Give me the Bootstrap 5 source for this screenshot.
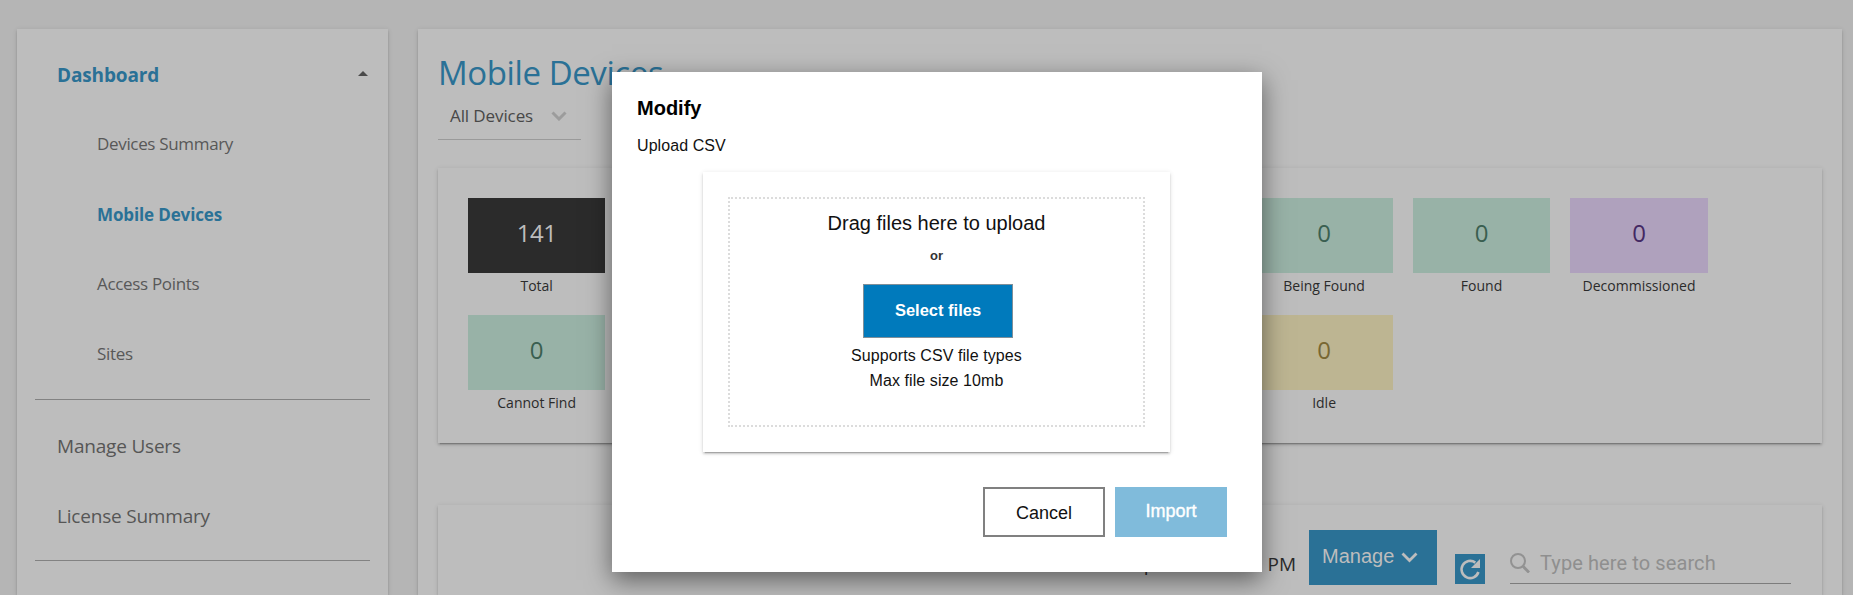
<!DOCTYPE html>
<html lang="en">
<head>
<meta charset="utf-8">
<title>Mobile Devices</title>
<link href="https://cdn.jsdelivr.net/npm/bootstrap@5.3.0/dist/css/bootstrap.min.css" rel="stylesheet">
<style>
  body { background: #b5b5b5; font-family: "Open Sans", "Noto Sans", sans-serif; height: 595px; overflow: hidden; color: #2b2b2b; }
  .shell { padding: 29px 11px 0 17px; gap: 30px; height: 595px; overflow: hidden; }
  .panel { background: #bdbdbd; box-shadow: 0 3px 1px -2px rgba(0,0,0,.2), 0 2px 2px 0 rgba(0,0,0,.14), 0 1px 5px 0 rgba(0,0,0,.12); }
  .side { width: 371px; padding: 11px 18px 0; }
  .side .nav-link { height: 70px; padding: 0 2px 2px 22px; font-size: 19px; letter-spacing: -.2px; color: #565656; display: flex; align-items: center; white-space: nowrap; }
  .side .sub-item { padding-left: 62px; font-size: 17px; letter-spacing: -.33px; color: #585858; }
  .side .active { color: #2a7196; font-weight: 700; letter-spacing: -.13px; padding-bottom: 0; }
  .rule { height: 1px; background: #828282; }
  .main-panel { padding: 0 20px; }
  .page-title { font-size: 33px; font-weight: 400; letter-spacing: -.4px; color: #2a7196; line-height: 46px; margin: 0 0 -1px 0; padding-top: 21px; white-space: nowrap; }
  .filter { width: 143px; height: 45px; border-bottom: 1px solid #9a9a9a; padding: 0 14px 3px 12px; font-size: 17px; letter-spacing: -.1px; color: #484848; white-space: nowrap; }
  .stats { margin-top: 28px; height: 275px; padding: 30px 30px 0; display: grid; grid-template-columns: repeat(8, 137.3px); column-gap: 20.2px; grid-template-rows: 117px 117px; align-content: start; }
  .tile { height: 75px; font-size: 24px; line-height: 70px; }
  .tile-label { font-size: 14px; line-height: 25px; white-space: nowrap; }
  .t-dark { background: #2b2b2b; color: #bdbdbd; letter-spacing: -.5px; }
  .t-green { background: #98b2a7; color: #3a5f50; }
  .t-purple { background: #afa1bd; color: #432863; }
  .t-yellow { background: #bdb592; color: #786732; }
  .table-card { margin-top: 62px; height: 90px; padding: 25px 31px 0 0; }
  .stamp { font-size: 19px; line-height: 26px; margin-top: 21px; }
  .btn-manage { width: 128px; height: 55px; background: #2a7196; color: #bdbdbd; font: 20px/53px "Liberation Sans", Arial, sans-serif; padding: 0 0 0 13px; }
  .btn-refresh { width: 30px; height: 30px; background: #2a7196; margin: 24px 25px 0 18px; }
  .search { width: 281px; height: 33px; margin-top: 21px; border-bottom: 1px solid #7c7c7c; font: 20px/24px Roboto, sans-serif; letter-spacing: .1px; color: #8f8f8f; }
  .dlg { position: absolute; left: 612px; top: 72px; width: 650px; height: 500px; background: #fff; color: #111; font: 16px/25px "Liberation Sans", Arial, sans-serif; padding: 24px 35px 0 25px; box-shadow: 0 8px 24px rgba(0,0,0,.5); }
  .dlg h2 { font-size: 20px; font-weight: 700; line-height: 24px; margin: 0; color: #000; }
  .drop-card { width: 467px; height: 280px; margin: 14px 0 0 66px; padding: 25px; background: #fff; }
  .drop-zone { height: 230px; border: 2px dotted #dcdcdc; padding-top: 12px; }
  .or-text { font-size: 13px; font-weight: 700; line-height: 20px; color: #333; margin-top: 10px; }
  .btn-select { width: 150px; height: 54px; background: #007abc; border: 1px solid #7f8f99; color: #fff; font-size: 16.5px; font-weight: 700; line-height: 51px; margin: 18px 0 5px 3px; }
  .hint { letter-spacing: .08px; }
  .btn-cancel, .btn-import { height: 50px; font-size: 18px; text-align: center; }
  .btn-cancel { width: 122px; border: 2px solid #808080; line-height: 49px; }
  .btn-import { width: 112px; background: #80bbdb; color: #fff; line-height: 49px; -webkit-text-stroke: .4px #fff; }
</style>
<script src="https://cdn.jsdelivr.net/npm/bootstrap@5.3.0/dist/js/bootstrap.bundle.min.js"></script>
</head>
<body>
<div class="shell d-flex">
  <nav class="panel side flex-shrink-0">
    <div class="nav flex-column">
      <a class="nav-link active justify-content-between"><span>Dashboard</span>
        <svg width="10" height="5" class="mb-1"><path d="M0 5L5 0L10 5Z" fill="#4a4a4a"/></svg></a>
      <a class="nav-link sub-item">Devices Summary</a>
      <a class="nav-link sub-item active">Mobile Devices</a>
      <a class="nav-link sub-item">Access Points</a>
      <a class="nav-link sub-item">Sites</a>
    </div>
    <div class="rule" style="margin:9px 0 12px"></div>
    <div class="nav flex-column">
      <a class="nav-link">Manage Users</a>
      <a class="nav-link">License Summary</a>
    </div>
    <div class="rule" style="margin-top:8px"></div>
  </nav>

  <main class="panel main-panel flex-grow-1">
    <h1 class="page-title">Mobile Devices</h1>
    <div class="filter d-flex align-items-center justify-content-between">
      <span>All Devices</span>
      <svg width="16" height="10" fill="none" stroke="#9c9c9c" stroke-width="3"><path d="M1.5 1.5L8 8L14.5 1.5"/></svg>
    </div>

    <section class="panel stats text-center">
      <div style="grid-column:1"><div class="tile t-dark">141</div><div class="tile-label">Total</div></div>
      <div style="grid-column:6"><div class="tile t-green">0</div><div class="tile-label">Being Found</div></div>
      <div style="grid-column:7"><div class="tile t-green">0</div><div class="tile-label">Found</div></div>
      <div style="grid-column:8"><div class="tile t-purple">0</div><div class="tile-label">Decommissioned</div></div>
      <div style="grid-column:1"><div class="tile t-green">0</div><div class="tile-label">Cannot Find</div></div>
      <div style="grid-column:6"><div class="tile t-yellow">0</div><div class="tile-label">Idle</div></div>
    </section>

    <section class="panel table-card d-flex justify-content-end align-items-start">
      <span class="stamp" style="margin-right:112px">p</span>
      <span class="stamp" style="margin-right:13px">PM</span>
      <div class="btn-manage d-flex">Manage
        <svg width="17" height="11" style="margin:22px 0 0 7px" fill="none" stroke="#bdbdbd" stroke-width="2.8"><path d="M1.5 1.5L8.5 8.5L15.5 1.5"/></svg>
      </div>
      <div class="btn-refresh d-flex">
        <svg width="30" height="30" viewBox="0 0 30 30"><path d="M20.3 8.6A8.6 8.6 0 1 0 23.4 18" fill="none" stroke="#bdbdbd" stroke-width="2.6"/><path d="M25 5V14H16Z" fill="#bdbdbd"/></svg>
      </div>
      <div class="search d-flex">
        <svg width="20" height="20" class="flex-shrink-0" style="margin:2px 10px 0 0" fill="none" stroke="#929292"><circle cx="8" cy="8" r="7" stroke-width="2"/><path d="M12.8 13L19 19.5" stroke-width="2.8"/></svg>
        <span>Type here to search</span>
      </div>
    </section>
  </main>
</div>

<div class="dlg" role="dialog">
  <h2>Modify</h2>
  <div class="hint" style="margin-top:13px">Upload CSV</div>
  <div class="panel drop-card">
    <div class="drop-zone text-center">
      <div style="font-size:20px">Drag files here to upload</div>
      <div class="or-text">or</div>
      <div class="d-flex justify-content-center"><div class="btn-select">Select files</div></div>
      <div class="hint">Supports CSV file types</div>
      <div class="hint">Max file size 10mb</div>
    </div>
  </div>
  <div class="d-flex justify-content-end" style="gap:10px;margin-top:35px">
    <div class="btn-cancel">Cancel</div>
    <div class="btn-import">Import</div>
  </div>
</div>
</body>
</html>
